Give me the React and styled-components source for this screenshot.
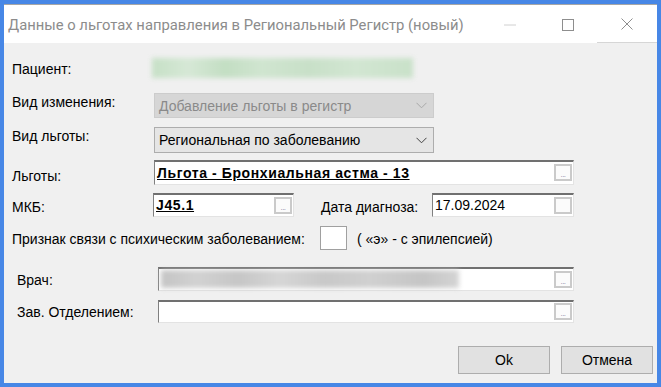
import React from "react";
import styled, { createGlobalStyle } from "styled-components";

const Global = createGlobalStyle`
  html, body { margin: 0; padding: 0; background: #4787e6; }
  body { width: 661px; height: 387px; overflow: hidden; }
`;

const Frame = styled.div`
  width: 661px;
  height: 387px;
  box-sizing: border-box;
  background: #4787e6;
  padding: 4px;
  display: flex;
`;

const Window = styled.div`
  flex: 1;
  display: flex;
  flex-direction: column;
  border-top: 1px solid #a6a6a6;
  background: #f0f0f0;
  font-family: "Liberation Sans", Arial, sans-serif;
  font-size: 14px;
  color: #000;
`;

const TitleBar = styled.div`
  height: 38px;
  background: #fff;
  display: flex;
  align-items: center;
  flex-shrink: 0;
`;

const Title = styled.div`
  flex: 1;
  padding-left: 4px;
  padding-top: 2px;
  font-family: Roboto, "Noto Sans", sans-serif;
  font-size: 14.8px;
  color: #8c8c8c;
  white-space: nowrap;
`;

const CtlButton = styled.div`
  width: ${(p) => p.$w}px;
  height: 38px;
  display: flex;
  align-items: center;
  justify-content: center;
  box-sizing: border-box;
  padding-top: 1px;
  border-bottom: ${(p) => (p.$line ? "1px solid #d6d6d6" : "none")};
`;

const Content = styled.div`
  flex: 1;
  display: flex;
  flex-direction: column;
  padding: 0 4px 0 8px;
`;

const Row = styled.div`
  display: flex;
  align-items: flex-start;
  height: ${(p) => p.$h}px;
  margin-top: ${(p) => p.$mt}px;
`;

const Label = styled.div`
  width: ${(p) => p.$w || 142}px;
  flex-shrink: 0;
  padding-top: ${(p) => p.$pt}px;
  padding-left: ${(p) => p.$pl || 0}px;
  box-sizing: border-box;
  line-height: 16px;
  white-space: nowrap;
`;

const Blur = styled.div`
  width: ${(p) => p.$w}px;
  height: ${(p) => p.$h}px;
  margin-left: ${(p) => p.$ml || 0}px;
  margin-top: ${(p) => p.$mt || 0}px;
  background: ${(p) => p.$bg};
  filter: blur(2.5px);
`;

const Combo = styled.div`
  width: 280px;
  height: ${(p) => p.$h}px;
  box-sizing: border-box;
  border: 1px solid ${(p) => (p.$disabled ? "#cccccc" : "#adadad")};
  background: ${(p) => (p.$disabled ? "#d6d6d6" : "#e5e5e5")};
  color: ${(p) => (p.$disabled ? "#8a8a8a" : "#000")};
  display: flex;
  align-items: center;
  padding: 0 6px 0 4px;
  line-height: 16px;
`;

const ComboText = styled.span`
  flex: 1;
  white-space: nowrap;
`;

const Field = styled.div`
  width: ${(p) => p.$w}px;
  height: ${(p) => p.$h || 24}px;
  margin-left: ${(p) => p.$ml || 0}px;
  box-sizing: border-box;
  background: #fff;
  border-top: 2px solid #707070;
  border-left: 1px solid #808080;
  border-right: 1px solid #e3e3e3;
  border-bottom: 1px solid #e3e3e3;
  display: flex;
  align-items: center;
  padding: 0 1px 0 2px;
`;

const FieldText = styled.span`
  flex: 1;
  white-space: nowrap;
  font-weight: ${(p) => (p.$bold ? 700 : 400)};
  text-decoration: ${(p) => (p.$bold ? "underline" : "none")};
  letter-spacing: ${(p) => (p.$bold ? "0.6px" : "0")};
  line-height: 16px;
  padding-bottom: 1px;
`;

const Ellipsis = styled.div`
  width: 18px;
  height: 17px;
  box-sizing: border-box;
  border: 2px solid #cacaca;
  background: #fbfbfb;
  display: flex;
  align-items: flex-end;
  justify-content: center;
  font-size: 8px;
  line-height: 8px;
  color: #8a8aa8;
  letter-spacing: -0.5px;
  flex-shrink: 0;
  margin-top: -1px;
`;

const InlineLabel = styled.div`
  width: ${(p) => (p.$w ? `${p.$w}px` : "auto")};
  margin-left: ${(p) => p.$ml}px;
  padding-top: ${(p) => p.$pt}px;
  line-height: 16px;
  white-space: nowrap;
  flex-shrink: 0;
`;

const CheckBox = styled.div`
  width: 27px;
  height: 24px;
  box-sizing: border-box;
  border: 1px solid #a0a0a0;
  background: #fff;
  margin-left: ${(p) => p.$ml}px;
  flex-shrink: 0;
`;

const Buttons = styled.div`
  display: flex;
  justify-content: flex-end;
  gap: 11px;
  margin-top: ${(p) => p.$mt}px;
`;

const Button = styled.button`
  width: 92px;
  height: 28px;
  box-sizing: border-box;
  border: 1px solid #adadad;
  background: #e1e1e1;
  font-family: "Liberation Sans", Arial, sans-serif;
  font-size: 14px;
  color: #000;
  padding: 0;
`;

const Chevron = ({ color }) => (
  <svg width="11" height="7" viewBox="0 0 11 7">
    <path d="M0.5 0.8 L5.5 5.8 L10.5 0.8" fill="none" stroke={color} strokeWidth="1" />
  </svg>
);

export default function App() {
  return (
    <>
      <Global />
      <Frame>
        <Window>
          <TitleBar>
            <Title>Данные о льготах направления в Региональный Регистр (новый)</Title>
            <CtlButton $w={58}>
              <svg width="12" height="2" viewBox="0 0 12 2">
                <line x1="0" y1="1" x2="12" y2="1" stroke="#d0d0d0" strokeWidth="1" />
              </svg>
            </CtlButton>
            <CtlButton $w={58}>
              <svg width="12" height="12" viewBox="0 0 12 12">
                <rect x="0.5" y="0.5" width="11" height="11" fill="none" stroke="#8e8e8e" strokeWidth="1" />
              </svg>
            </CtlButton>
            <CtlButton $w={60} $line>
              <svg width="12" height="12" viewBox="0 0 12 12">
                <path d="M0.5 0.5 L11.5 11.5 M11.5 0.5 L0.5 11.5" stroke="#8e8e8e" strokeWidth="1" />
              </svg>
            </CtlButton>
          </TitleBar>
          <Content>
            <Row $h={22} $mt={14}>
              <Label $pt={4}>Пациент:</Label>
              <Blur
                $w={261}
                $h={20}
                $ml={-2}
                $mt={1}
                $bg="linear-gradient(90deg, #c6e0c6 0%, #d6e8d6 14%, #c3dec3 28%, #d0e5d0 42%, #c8e0c8 60%, #d2e6d2 78%, #c9e1c9 100%)"
              />
            </Row>
            <Row $h={25} $mt={14}>
              <Label $pt={1}>Вид изменения:</Label>
              <Combo $h={25} $disabled>
                <ComboText>Добавление льготы в регистр</ComboText>
                <Chevron color="#a8a8a8" />
              </Combo>
            </Row>
            <Row $h={26} $mt={9}>
              <Label $pt={1}>Вид льготы:</Label>
              <Combo $h={26}>
                <ComboText>Региональная по заболеванию</ComboText>
                <Chevron color="#404040" />
              </Combo>
            </Row>
            <Row $h={25} $mt={7}>
              <Label $pt={8}>Льготы:</Label>
              <Field $w={420} $h={25}>
                <FieldText $bold>Льгота - Бронхиальная астма - 13</FieldText>
                <Ellipsis>...</Ellipsis>
              </Field>
            </Row>
            <Row $h={24} $mt={8}>
              <Label $pt={6}>МКБ:</Label>
              <Field $w={141} $ml={-1}>
                <FieldText $bold>J45.1</FieldText>
                <Ellipsis>...</Ellipsis>
              </Field>
              <InlineLabel $w={111} $ml={27} $pt={6}>Дата диагноза:</InlineLabel>
              <Field $w={142}>
                <FieldText>17.09.2024</FieldText>
                <Ellipsis />
              </Field>
            </Row>
            <Row $h={24} $mt={9}>
              <Label $w={300} $pt={5}>Признак связи с психическим заболеванием:</Label>
              <CheckBox $ml={8} />
              <InlineLabel $ml={10} $pt={5}>( «э» - с эпилепсией)</InlineLabel>
            </Row>
            <Row $h={24} $mt={17}>
              <Label $w={146} $pl={5} $pt={5}>Врач:</Label>
              <Field $w={416}>
                <FieldText>
                  <Blur
                    $w={298}
                    $h={18}
                    $bg="linear-gradient(90deg, #c4c4c4 0%, #d2d2d2 12%, #c6c6c6 26%, #d6d6d6 40%, #c8c8c8 55%, #d0d0d0 70%, #c5c5c5 88%, #d4d4d4 100%)"
                  />
                </FieldText>
                <Ellipsis>...</Ellipsis>
              </Field>
            </Row>
            <Row $h={23} $mt={9}>
              <Label $w={146} $pl={5} $pt={4}>Зав. Отделением:</Label>
              <Field $w={416} $h={23}>
                <FieldText />
                <Ellipsis>...</Ellipsis>
              </Field>
            </Row>
            <Buttons $mt={23}>
              <Button>Ok</Button>
              <Button>Отмена</Button>
            </Buttons>
          </Content>
        </Window>
      </Frame>
    </>
  );
}
